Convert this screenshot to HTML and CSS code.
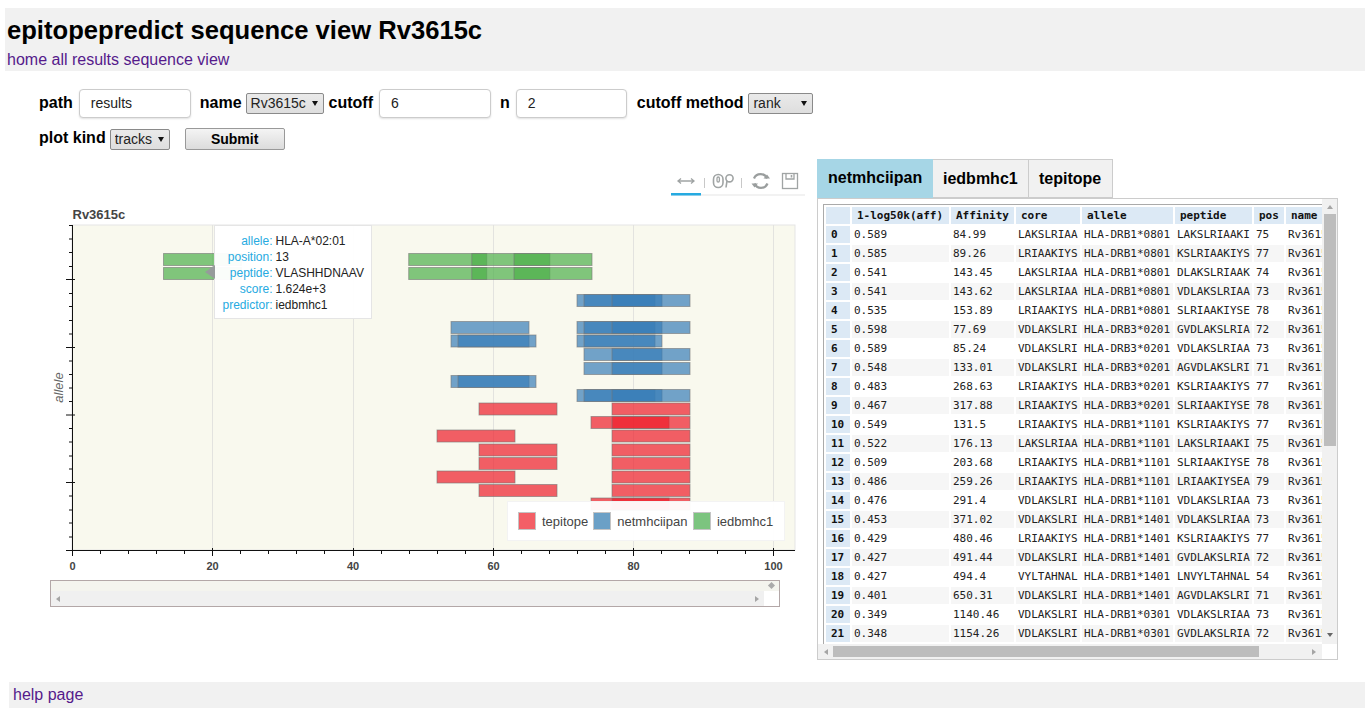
FILE: index.html
```html
<!DOCTYPE html>
<html lang="en">
<head>
    <meta charset="UTF-8">
    <title>epitopepredict sequence view Rv3615c</title>
    <link rel="stylesheet" href="styles.css">
</head>
<body>
    <div class="header">
        <h1>epitopepredict sequence view Rv3615c</h1>
        <div class="nav"><a href="#">home</a> <a href="#">all results</a> <a href="#">sequence view</a></div>
    </div>

    <form class="params">
        <div class="param-row">
            <label class="lbl lbl-path">path</label>
            <input class="txt" type="text" value="results">
            <label class="lbl lbl-name">name</label>
            <span class="sel-wrap"><select class="sel sel-name"><option>Rv3615c</option></select></span>
            <label class="lbl lbl-cutoff">cutoff</label>
            <input class="txt" type="text" value="6">
            <label class="lbl lbl-n">n</label>
            <input class="txt txt-n" type="text" value="2">
            <label class="lbl lbl-method">cutoff method</label>
            <span class="sel-wrap"><select class="sel sel-method"><option>rank</option></select></span>
        </div>
        <div class="param-row row-two">
            <label class="lbl lbl-kind">plot kind</label>
            <span class="sel-wrap"><select class="sel sel-kind"><option>tracks</option></select></span>
            <button class="submit" type="button">Submit</button>
        </div>
    </form>

    <div class="main">
        <div class="plot-col">
            <div class="plot">
                <svg class="chart" width="817" height="421" viewBox="0 159 817 421">
                    <!-- toolbar -->
                    <g class="tool">
                        <path d="M678 181H694M681 178.5L678 181L681 183.5M691 178.5L694 181L691 183.5"/>
                        <path class="tool-sep" d="M704.5 178V188M741.5 178V188"/>
                        <rect class="tool-bold" x="713.5" y="174.5" width="9.5" height="13" rx="4.7"/>
                        <rect x="717" y="177" width="2.4" height="5" rx="1.2"/>
                        <circle class="tool-bold" cx="729.5" cy="178.3" r="3.6"/>
                        <path class="tool-bold" d="M727 181L726 187.5"/>
                        <path class="tool-bold tool-reset" d="M754 178.5A7 7 0 0 1 767 178.5M767.5 183.5A7 7 0 0 1 754.5 183.5"/>
                        <path class="tool-head" d="M763.5 178.5H770L767 174.5ZM758 183.5H751.5L754.5 187.5Z"/>
                        <rect x="782.5" y="173.5" width="15" height="15"/>
                        <path d="M786 173.5V179H794V173.5"/>
                        <path class="tool-bold" d="M791.5 175V177.5"/>
                    </g>
                    <rect class="tool-line" x="671" y="194.5" width="134" height="1"/>
                    <rect class="tool-active" x="671" y="193" width="30" height="2.5"/>

                    <text class="title" x="72.5" y="219">Rv3615c</text>
                    <text class="axis-name" transform="translate(62.7 387.5) rotate(-90)" text-anchor="middle">allele</text>

                    <!-- plot frame -->
                    <rect class="frame" x="72" y="225" width="723" height="325"/>
                    <path class="grid" d="M212.5 225V550M353.5 225V550M493.5 225V550M633.5 225V550M773.5 225V550"/>

                    <!-- iedbmhc1 -->
                    <g class="bars green">
                        <rect x="163.5" y="253.5" width="78" height="12"/>
                        <rect x="163.5" y="267.5" width="78" height="12"/>
                        <rect x="408.7" y="253.5" width="78" height="12"/>
                        <rect x="471.8" y="253.5" width="78" height="12"/>
                        <rect x="514" y="253.5" width="78" height="12"/>
                        <rect x="408.7" y="267.5" width="78" height="12"/>
                        <rect x="471.8" y="267.5" width="78" height="12"/>
                        <rect x="514" y="267.5" width="78" height="12"/>
                    </g>

                    <!-- netmhciipan -->
                    <g class="bars blue">
                        <rect x="577" y="294.5" width="78" height="12"/>
                        <rect x="584" y="294.5" width="78" height="12"/>
                        <rect x="612" y="294.5" width="78" height="12"/>
                        <rect x="451" y="321.5" width="78" height="12"/>
                        <rect x="577" y="321.5" width="78" height="12"/>
                        <rect x="584" y="321.5" width="78" height="12"/>
                        <rect x="612" y="321.5" width="78" height="12"/>
                        <rect x="451" y="335" width="78" height="12"/>
                        <rect x="458" y="335" width="78" height="12"/>
                        <rect x="577" y="335" width="78" height="12"/>
                        <rect x="584" y="335" width="78" height="12"/>
                        <rect x="584" y="348.5" width="78" height="12"/>
                        <rect x="612" y="348.5" width="78" height="12"/>
                        <rect x="584" y="362.5" width="78" height="12"/>
                        <rect x="612" y="362.5" width="78" height="12"/>
                        <rect x="451" y="375.5" width="78" height="12"/>
                        <rect x="458" y="375.5" width="78" height="12"/>
                        <rect x="577" y="389.5" width="78" height="12"/>
                        <rect x="584" y="389.5" width="78" height="12"/>
                        <rect x="612" y="389.5" width="78" height="12"/>
                    </g>

                    <!-- tepitope -->
                    <g class="bars red">
                        <rect x="479" y="403" width="78" height="12"/>
                        <rect x="612" y="403" width="78" height="12"/>
                        <rect x="591" y="416.5" width="78" height="12"/>
                        <rect x="612" y="416.5" width="78" height="12"/>
                        <rect x="437" y="430" width="78" height="12"/>
                        <rect x="612" y="430" width="78" height="12"/>
                        <rect x="479" y="444" width="78" height="12"/>
                        <rect x="612" y="444" width="78" height="12"/>
                        <rect x="479" y="457.5" width="78" height="12"/>
                        <rect x="612" y="457.5" width="78" height="12"/>
                        <rect x="437" y="471" width="78" height="12"/>
                        <rect x="612" y="471" width="78" height="12"/>
                        <rect x="479" y="484.5" width="78" height="12"/>
                        <rect x="612" y="484.5" width="78" height="12"/>
                        <rect x="591" y="498" width="78" height="12"/>
                        <rect x="612" y="498" width="78" height="12"/>
                    </g>

                    <!-- axes -->
                    <path class="axis" d="M72.5 225V550M66 550.5H795"/>
                    <path class="axis" d="M69 225.5H73M69 239H72M69 252.5H72M69 266.5H72M66 279.5H75M69 293.5H72M69 306.5H72M69 320.5H72M69 334H72M66 347.5H75M69 361H72M69 374.5H72M69 388H72M69 401.5H72M66 415H75M69 428.5H72M69 442H72M69 456H72M69 469H72M66 482.5H75M69 496H72M69 510H72M69 523H72M69 537H72"/>
                    <path class="axis" d="M72.5 550V556M100.5 550V554M128.5 550V554M156.5 550V554M184.5 550V554M212.5 548V556M240.5 550V554M268.5 550V554M296.5 550V554M324.5 550V554M353.5 548V556M381.5 550V554M409.5 550V554M437.5 550V554M465.5 550V554M493.5 548V556M521.5 550V554M549.5 550V554M577.5 550V554M605.5 550V554M633.5 548V556M661.5 550V554M689.5 550V554M717.5 550V554M745.5 550V554M773.5 548V556"/>
                    <g class="tick-labels" text-anchor="middle">
                        <text x="72.5" y="570">0</text>
                        <text x="212.5" y="570">20</text>
                        <text x="353" y="570">40</text>
                        <text x="493.5" y="570">60</text>
                        <text x="633.5" y="570">80</text>
                        <text x="773.5" y="570">100</text>
                    </g>
                </svg>

                <div class="legend">
                    <span class="swatch sw-red"></span><span class="legend-txt lt-red">tepitope</span>
                    <span class="swatch sw-blue"></span><span class="legend-txt lt-blue">netmhciipan</span>
                    <span class="swatch sw-green"></span><span class="legend-txt">iedbmhc1</span>
                </div>

                <div class="tooltip">
                    <span class="tip-arrow"></span>
                    <span class="tip-key">allele:</span><span>HLA-A*02:01</span>
                    <span class="tip-key">position:</span><span>13</span>
                    <span class="tip-key">peptide:</span><span>VLASHHDNAAV</span>
                    <span class="tip-key">score:</span><span>1.624e+3</span>
                    <span class="tip-key">predictor:</span><span>iedbmhc1</span>
                </div>
            </div>

            <div class="plot-scroll">
                <div class="plot-scroll-top"><span class="updown"></span></div>
                <div class="plot-scroll-bar">
                    <span class="arrow-l"></span>
                    <span class="arrow-r"></span>
                </div>
            </div>
        </div>

        <div class="results">
            <div class="tabs">
                <div class="tab active">netmhciipan</div>
                <div class="tab">iedbmhc1</div>
                <div class="tab">tepitope</div>
            </div>
            <div class="panel">
                <div class="table-view">
                    <table class="df">
                        <thead>
                            <tr><th></th><th>1-log50k(aff)</th><th>Affinity</th><th>core</th><th>allele</th><th>peptide</th><th>pos</th><th>name</th></tr>
                        </thead>
                        <tbody>
                            <tr><th>0</th><td>0.589</td><td>84.99</td><td>LAKSLRIAA</td><td>HLA-DRB1*0801</td><td>LAKSLRIAAKI</td><td>75</td><td>Rv3615c</td></tr>
                            <tr><th>1</th><td>0.585</td><td>89.26</td><td>LRIAAKIYS</td><td>HLA-DRB1*0801</td><td>KSLRIAAKIYS</td><td>77</td><td>Rv3615c</td></tr>
                            <tr><th>2</th><td>0.541</td><td>143.45</td><td>LAKSLRIAA</td><td>HLA-DRB1*0801</td><td>DLAKSLRIAAK</td><td>74</td><td>Rv3615c</td></tr>
                            <tr><th>3</th><td>0.541</td><td>143.62</td><td>LAKSLRIAA</td><td>HLA-DRB1*0801</td><td>VDLAKSLRIAA</td><td>73</td><td>Rv3615c</td></tr>
                            <tr><th>4</th><td>0.535</td><td>153.89</td><td>LRIAAKIYS</td><td>HLA-DRB1*0801</td><td>SLRIAAKIYSE</td><td>78</td><td>Rv3615c</td></tr>
                            <tr><th>5</th><td>0.598</td><td>77.69</td><td>VDLAKSLRI</td><td>HLA-DRB3*0201</td><td>GVDLAKSLRIA</td><td>72</td><td>Rv3615c</td></tr>
                            <tr><th>6</th><td>0.589</td><td>85.24</td><td>VDLAKSLRI</td><td>HLA-DRB3*0201</td><td>VDLAKSLRIAA</td><td>73</td><td>Rv3615c</td></tr>
                            <tr><th>7</th><td>0.548</td><td>133.01</td><td>VDLAKSLRI</td><td>HLA-DRB3*0201</td><td>AGVDLAKSLRI</td><td>71</td><td>Rv3615c</td></tr>
                            <tr><th>8</th><td>0.483</td><td>268.63</td><td>LRIAAKIYS</td><td>HLA-DRB3*0201</td><td>KSLRIAAKIYS</td><td>77</td><td>Rv3615c</td></tr>
                            <tr><th>9</th><td>0.467</td><td>317.88</td><td>LRIAAKIYS</td><td>HLA-DRB3*0201</td><td>SLRIAAKIYSE</td><td>78</td><td>Rv3615c</td></tr>
                            <tr><th>10</th><td>0.549</td><td>131.5</td><td>LRIAAKIYS</td><td>HLA-DRB1*1101</td><td>KSLRIAAKIYS</td><td>77</td><td>Rv3615c</td></tr>
                            <tr><th>11</th><td>0.522</td><td>176.13</td><td>LAKSLRIAA</td><td>HLA-DRB1*1101</td><td>LAKSLRIAAKI</td><td>75</td><td>Rv3615c</td></tr>
                            <tr><th>12</th><td>0.509</td><td>203.68</td><td>LRIAAKIYS</td><td>HLA-DRB1*1101</td><td>SLRIAAKIYSE</td><td>78</td><td>Rv3615c</td></tr>
                            <tr><th>13</th><td>0.486</td><td>259.26</td><td>LRIAAKIYS</td><td>HLA-DRB1*1101</td><td>LRIAAKIYSEA</td><td>79</td><td>Rv3615c</td></tr>
                            <tr><th>14</th><td>0.476</td><td>291.4</td><td>VDLAKSLRI</td><td>HLA-DRB1*1101</td><td>VDLAKSLRIAA</td><td>73</td><td>Rv3615c</td></tr>
                            <tr><th>15</th><td>0.453</td><td>371.02</td><td>VDLAKSLRI</td><td>HLA-DRB1*1401</td><td>VDLAKSLRIAA</td><td>73</td><td>Rv3615c</td></tr>
                            <tr><th>16</th><td>0.429</td><td>480.46</td><td>LRIAAKIYS</td><td>HLA-DRB1*1401</td><td>KSLRIAAKIYS</td><td>77</td><td>Rv3615c</td></tr>
                            <tr><th>17</th><td>0.427</td><td>491.44</td><td>VDLAKSLRI</td><td>HLA-DRB1*1401</td><td>GVDLAKSLRIA</td><td>72</td><td>Rv3615c</td></tr>
                            <tr><th>18</th><td>0.427</td><td>494.4</td><td>VYLTAHNAL</td><td>HLA-DRB1*1401</td><td>LNVYLTAHNAL</td><td>54</td><td>Rv3615c</td></tr>
                            <tr><th>19</th><td>0.401</td><td>650.31</td><td>VDLAKSLRI</td><td>HLA-DRB1*1401</td><td>AGVDLAKSLRI</td><td>71</td><td>Rv3615c</td></tr>
                            <tr><th>20</th><td>0.349</td><td>1140.46</td><td>VDLAKSLRI</td><td>HLA-DRB1*0301</td><td>VDLAKSLRIAA</td><td>73</td><td>Rv3615c</td></tr>
                            <tr><th>21</th><td>0.348</td><td>1154.26</td><td>VDLAKSLRI</td><td>HLA-DRB1*0301</td><td>GVDLAKSLRIA</td><td>72</td><td>Rv3615c</td></tr>
                        </tbody>
                    </table>
                </div>
                <div class="vscroll">
                    <span class="arrow-u"></span>
                    <span class="vthumb"></span>
                    <span class="arrow-d"></span>
                </div>
                <div class="hscroll">
                    <span class="arrow-l"></span>
                    <span class="hthumb"></span>
                    <span class="arrow-r"></span>
                </div>
                <div class="corner"></div>
            </div>
        </div>
    </div>

    <div class="footer"><a href="#">help page</a></div>
</body>
</html>
```

FILE: styles.css
```css
* {
    box-sizing: border-box;
}

html, body {
    overflow: hidden;
}

body {
    margin: 0;
    padding-top: 8px;
    height: 711px;
    font-family: "Liberation Sans", Arial, sans-serif;
    color: #000;
}

a {
    color: #551a8b;
    text-decoration: none;
}

.header {
    margin-left: 5px;
    height: 63px;
    padding: 8px 0 0 2px;
    background-color: #f1f1f1;
}

h1 {
    margin: 0;
    font-size: 25.6px;
    line-height: 29px;
    font-weight: bold;
}

.nav {
    margin-top: 6px;
    font-size: 16px;
    line-height: 18px;
}

/* form */
.params {
    padding: 18px 0 0 39px;
}

.param-row {
    display: flex;
    align-items: center;
    height: 29px;
}

.row-two {
    margin-top: 10px;
    height: 22px;
}

.lbl {
    padding-bottom: 2px;
    font-size: 16px;
    font-weight: bold;
    white-space: nowrap;
}

.lbl-path { margin-right: 6px; }
.lbl-name { margin: 0 4px 0 9px; }
.lbl-cutoff { margin: 0 6px 0 5px; }
.lbl-n { margin: 0 6px 0 9px; }
.lbl-method { margin: 0 5px 0 10px; }
.lbl-kind { margin-right: 4px; }

.txt {
    width: 112px;
    height: 29px;
    padding: 0 11px 2px;
    border: 1px solid #ccc;
    border-radius: 4px;
    box-shadow: 0 1px 2px rgba(0, 0, 0, 0.12);
    font: 14px "Liberation Sans", Arial, sans-serif;
    color: #222;
}

.txt-n {
    width: 111px;
}

.sel-wrap {
    position: relative;
    display: flex;
}

.sel-wrap::after {
    content: "";
    position: absolute;
    right: 6px;
    top: 8px;
    border-left: 3px solid transparent;
    border-right: 3px solid transparent;
    border-top: 5px solid #111;
}

.sel {
    appearance: none;
    height: 21px;
    padding: 0 0 1px 4px;
    font: 14px "Liberation Sans", Arial, sans-serif;
    color: #222;
    background: linear-gradient(#eaeaea, #dedede);
    border: 1px solid #8a8a8a;
    border-radius: 2px;
}

.sel-name { width: 78px; }
.sel-method { width: 65px; }
.sel-kind { width: 60px; }

.submit {
    width: 100px;
    height: 22px;
    margin-left: 15px;
    padding: 0;
    font: bold 14px "Liberation Sans", Arial, sans-serif;
    color: #000;
    border: 1px solid #999;
    border-radius: 2px;
    background: linear-gradient(#f4f4f4, #dcdcdc);
}

/* plot and table */
.main {
    display: flex;
    margin-top: 9px;
}

.plot-col {
    width: 817px;
    flex: none;
}

.plot {
    position: relative;
    height: 421px;
}

.chart {
    display: block;
}

.tool path, .tool rect, .tool circle {
    fill: none;
    stroke: #a0a4a4;
    stroke-width: 1.3;
}

.tool .tool-bold {
    stroke-width: 1.6;
}

.tool .tool-reset {
    stroke: #9a9e9e;
    stroke-width: 2.2;
}

.tool .tool-sep {
    stroke: #c8c8c8;
    stroke-width: 1;
}

.tool .tool-head {
    fill: #9a9e9e;
    stroke: none;
}

.tool-line {
    fill: #e5e5e5;
}

.tool-active {
    fill: #26aae1;
}

.title {
    font-size: 13px;
    font-weight: bold;
    fill: #444;
}

.axis-name {
    font-size: 13px;
    font-style: italic;
    fill: #666;
}

.frame {
    fill: #f9f9ee;
    stroke: #e5e5e5;
    stroke-width: 1;
}

.grid {
    fill: none;
    stroke: #e3e3df;
    stroke-width: 1;
}

.bars rect {
    stroke: #777;
    stroke-opacity: 0.6;
    stroke-width: 1;
}

.green rect {
    fill: #4daf4a;
    fill-opacity: 0.7;
}

.blue rect {
    fill: #377eb8;
    fill-opacity: 0.7;
}

.red rect {
    fill: #ee1c2a;
    fill-opacity: 0.7;
}

.axis {
    fill: none;
    stroke: #111;
    stroke-width: 1;
}

.tick-labels text {
    font-size: 11px;
    font-weight: bold;
    fill: #444;
}

.legend {
    position: absolute;
    left: 507px;
    top: 342px;
    width: 278px;
    height: 40px;
    display: flex;
    align-items: center;
    padding-left: 10px;
    background-color: rgba(255, 255, 255, 0.95);
    border: 1px solid #f3f3f3;
    font-size: 13px;
    color: #444;
}

.swatch {
    width: 18px;
    height: 18px;
    margin-right: 6px;
    border: 1px solid #c4c4c4;
}

.sw-red { background-color: #f35f66; }
.sw-blue { background-color: #6ba0c6; }
.sw-green { background-color: #7cc47f; }

.lt-red { margin-right: 5px; }
.lt-blue { margin-right: 5.5px; }

.tooltip {
    position: absolute;
    left: 214px;
    top: 66px;
    width: 158px;
    height: 94px;
    display: grid;
    grid-template-columns: 57.5px auto;
    grid-auto-rows: 16px;
    column-gap: 3px;
    align-items: center;
    padding: 7px 0 0 0;
    background-color: rgba(255, 255, 255, 0.96);
    border: 1px solid #e5e5e5;
    font-size: 12px;
    color: #222;
}

.tip-key {
    text-align: right;
    color: #26aae1;
}

.tip-arrow {
    position: absolute;
    left: -10px;
    top: 39px;
    width: 0;
    height: 0;
    border-top: 7px solid transparent;
    border-bottom: 7px solid transparent;
    border-right: 10px solid #969b9b;
}

.plot-scroll {
    width: 730px;
    height: 27px;
    margin-left: 50px;
    border: 1px solid #b3a7a7;
}

.plot-scroll-top {
    position: relative;
    height: 10px;
    background-color: #f4f4ee;
}

.updown {
    position: absolute;
    right: 5px;
    top: 2px;
    width: 5px;
    height: 5px;
    background-color: #aaa;
    transform: rotate(45deg);
}

.plot-scroll-bar {
    display: flex;
    justify-content: space-between;
    align-items: center;
    height: 15px;
    margin-right: 15px;
    padding: 0 5px;
    background-color: #f0f0f0;
}

.arrow-l {
    border-top: 3.5px solid transparent;
    border-bottom: 3.5px solid transparent;
    border-right: 4px solid #a5a5a5;
}

.arrow-r {
    border-top: 3.5px solid transparent;
    border-bottom: 3.5px solid transparent;
    border-left: 4px solid #a5a5a5;
}

.arrow-u {
    border-left: 3.5px solid transparent;
    border-right: 3.5px solid transparent;
    border-bottom: 4px solid #a5a5a5;
}

.arrow-d {
    margin-top: auto;
    margin-bottom: 7px;
    border-left: 3.5px solid transparent;
    border-right: 3.5px solid transparent;
    border-top: 4px solid #666;
}

.results {
    width: 521px;
    flex: none;
}

.tabs {
    display: flex;
    height: 39px;
}

.tab {
    padding: 0 10px;
    font-size: 16px;
    font-weight: bold;
    line-height: 37px;
    background-color: #f1f1f1;
    border: 1px solid #ccc;
    border-left: 0;
}

.tab.active {
    width: 116px;
    padding-left: 11px;
    background-color: #a6d6e6;
    border: 0;
}

.tab:nth-child(2) { width: 96px; }
.tab:nth-child(3) { width: 84px; }

.panel {
    display: grid;
    grid-template-columns: 1fr 15px;
    grid-template-rows: 445px 15px;
    height: 462px;
    padding: 0 0 0 5px;
    border: 1px solid #ccc;
}

.table-view {
    margin-top: 5px;
    overflow: hidden;
    border-top: 1px solid #aaa;
    border-left: 1px solid #aaa;
    height: 440px;
}

.df {
    border-spacing: 2px;
    border-collapse: separate;
    font-family: "DejaVu Sans Mono", monospace;
    font-size: 11px;
    line-height: 17px;
    color: #222;
    white-space: nowrap;
}

.df th {
    padding: 0 5px;
    text-align: left;
    color: #111;
    background-color: #dce9f5;
}

.df thead th:nth-child(1) { min-width: 24px; }
.df thead th:nth-child(2) { min-width: 97px; }
.df thead th:nth-child(3) { min-width: 63px; }
.df thead th:nth-child(4) { min-width: 64px; }
.df thead th:nth-child(5) { min-width: 91px; }
.df thead th:nth-child(6) { min-width: 77px; }
.df thead th:nth-child(7) { min-width: 30px; }

.df td {
    padding: 0 2px;
}

.df tbody tr:nth-child(even) td {
    background-color: #f6f6f6;
}

.vscroll {
    display: flex;
    flex-direction: column;
    align-items: center;
    background-color: #f1f1f1;
    padding-top: 6px;
}

.vthumb {
    width: 12px;
    height: 232px;
    margin-top: 5px;
    background-color: #bdbdbd;
}

.hscroll {
    display: flex;
    align-items: center;
    margin-left: -5px;
    padding: 0 6px;
    background-color: #f1f1f1;
}

.hthumb {
    width: 426px;
    height: 11px;
    margin-left: 5px;
    background-color: #bdbdbd;
}

.hscroll .arrow-r {
    margin-left: auto;
}

.corner {
    background-color: #fff;
}

.footer {
    margin: 22px 0 0 9px;
    height: 26px;
    padding-left: 4px;
    font-size: 16px;
    line-height: 25px;
    background-color: #f1f1f1;
}
```
